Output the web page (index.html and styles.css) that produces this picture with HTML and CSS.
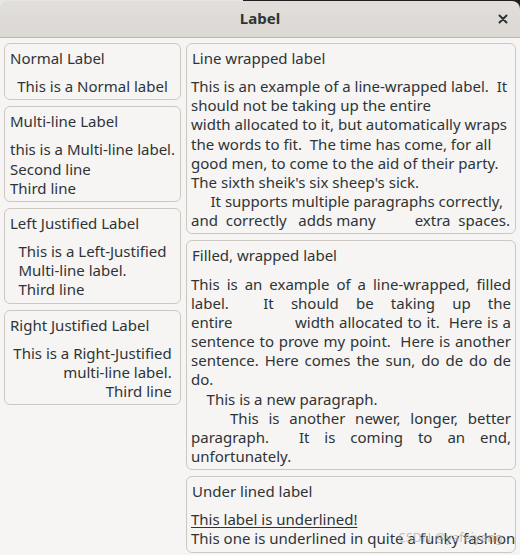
FILE: index.html
```html
<!DOCTYPE html>
<html lang="en">
<head>
<meta charset="utf-8">
<title>Label</title>
<link rel="stylesheet" href="styles.css">
</head>
<body>
<div class="window">
  <header class="titlebar">
    <span></span>
    <span class="title">Label</span>
    <button class="close" aria-label="Close">
      <svg width="10" height="10" viewBox="0 0 10 10"><path d="M1.5 1.5 L8.5 8.5 M8.5 1.5 L1.5 8.5" stroke="#2e3436" stroke-width="2" stroke-linecap="round" fill="none"/></svg>
    </button>
  </header>
  <main class="content">
    <div class="col col-left">
      <section class="frame">
        <div class="frame-title">Normal Label</div>
        <div class="frame-body center"><div class="lbl">This is a Normal label</div></div>
      </section>
      <section class="frame">
        <div class="frame-title">Multi-line Label</div>
        <div class="frame-body center"><div class="lbl">this is a Multi-line label.
Second line
Third line</div></div>
      </section>
      <section class="frame">
        <div class="frame-title">Left Justified Label</div>
        <div class="frame-body center"><div class="lbl">This is a Left-Justified
Multi-line label.
Third line</div></div>
      </section>
      <section class="frame">
        <div class="frame-title">Right Justified Label</div>
        <div class="frame-body center"><div class="lbl rjust">This is a Right-Justified
multi-line label.
Third line</div></div>
      </section>
    </div>
    <div class="col col-right">
      <section class="frame">
        <div class="frame-title">Line wrapped label</div>
        <div class="frame-body wrapped">
          <div class="ln">This is an example of a line-wrapped label.  It</div>
          <div class="ln">should not be taking up the entire</div>
          <div class="ln">width allocated to it, but automatically wraps</div>
          <div class="ln">the words to fit.  The time has come, for all</div>
          <div class="ln">good men, to come to the aid of their party.</div>
          <div class="ln">The sixth sheik's six sheep's sick.</div>
          <div class="ln">     It supports multiple paragraphs correctly,</div>
          <div class="ln">and  correctly   adds many          extra  spaces.</div>
        </div>
      </section>
      <section class="frame">
        <div class="frame-title">Filled, wrapped label</div>
        <div class="frame-body filled">
          <div class="ln fill">This is an example of a line-wrapped, filled</div>
          <div class="ln fill">label.  It should be taking up the</div>
          <div class="ln fill">entire              width allocated to it.  Here is a</div>
          <div class="ln fill">sentence to prove my point.  Here is another</div>
          <div class="ln fill">sentence. Here comes the sun, do de do de</div>
          <div class="ln">do.</div>
          <div class="ln">    This is a new paragraph.</div>
          <div class="ln fill">    This is another newer, longer, better</div>
          <div class="ln fill">paragraph.  It is coming to an end,</div>
          <div class="ln">unfortunately.</div>
        </div>
      </section>
      <section class="frame frame-under">
        <div class="frame-title">Under lined label</div>
        <div class="frame-body">
          <div class="ln underline">This label is underlined!</div>
          <div class="ln">This one is underlined in quite a funky fashion</div>
        </div>
        <div class="watermark">CSDN @yafeiyang</div>
      </section>
    </div>
  </main>
</div>
</body>
</html>
```
FILE: styles.css
```css
html {
  background: linear-gradient(to right, #e6e6e6 0, #e6e6e6 243px, #1e1e1e 243px) top left / 100% 12px no-repeat, #f6f5f4;
}
body {
  margin: 0;
  font-family: "Noto Sans", "DejaVu Sans", sans-serif;
  font-size: 15px;
  line-height: 19.15px;
  color: #2e3436;
}
.window {
  padding-top: 1px;
}
.titlebar {
  height: 36px;
  display: grid;
  grid-template-columns: 1fr auto 1fr;
  align-items: center;
  background: linear-gradient(#e1dedb, #dcd8d4);
  border-bottom: 1px solid #bdb6af;
  border-radius: 8px 8px 0 0;
}
.title {
  font-weight: bold;
  font-size: 15px;
}
.close {
  justify-self: end;
  width: 26px;
  height: 26px;
  margin-right: 4px;
  border: 0;
  padding: 0;
  background: transparent;
  display: flex;
  align-items: center;
  justify-content: center;
}
.close svg { display: block; }
.content {
  display: flex;
  gap: 5px;
  padding: 5px 4px 0 4px;
  align-items: flex-start;
}
.col {
  display: flex;
  flex-direction: column;
  gap: 6px;
}
.col-left { width: 177px; flex: none; }
.col-right { flex: 1; min-width: 0; }
.frame {
  position: relative;
  border: 1px solid #cdc7c2;
  border-radius: 6px;
  padding: 5px 4px 3px 4px;
}
.frame-title {
  margin-left: 1px;
  margin-bottom: 9px;
  white-space: pre;
}
.frame-body.center { text-align: center; }
.lbl {
  display: inline-block;
  text-align: left;
  white-space: pre;
}
.lbl.rjust { text-align: right; }
.ln { white-space: pre; }
.ln.fill {
  white-space: pre-wrap;
  text-align: justify;
  text-align-last: justify;
}
.underline {
  text-decoration: underline;
  text-underline-offset: 2px;
}
.watermark {
  position: absolute;
  right: 12px;
  bottom: 4px;
  font-size: 12px;
  color: rgba(170, 170, 170, 0.75);
  letter-spacing: 0.3px;
  pointer-events: none;
}
```
